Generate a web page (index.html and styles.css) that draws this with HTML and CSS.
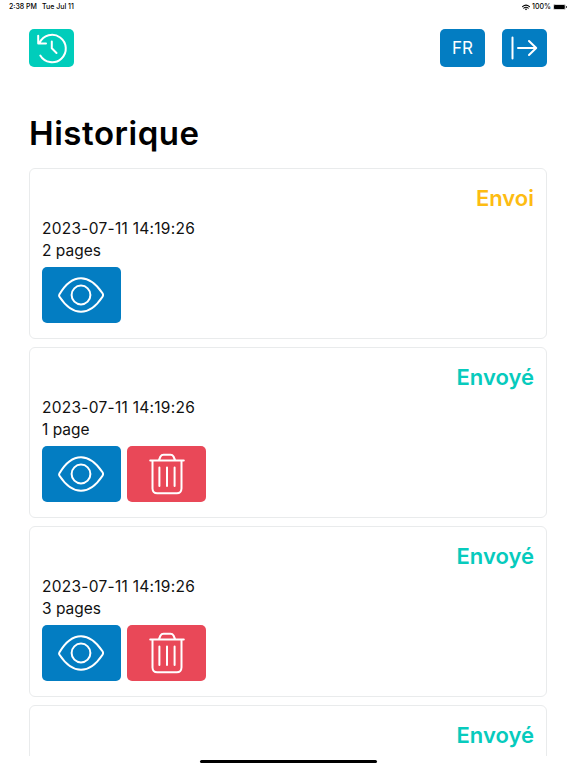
FILE: index.html
```
<!DOCTYPE html>
<html lang="fr">
<head>
<meta charset="utf-8">
<title>Historique</title>
<link rel="stylesheet" href="styles.css">
</head>
<body>
<svg class="symbols" aria-hidden="true">
  <symbol id="eye" viewBox="0 0 46 36">
    <path d="M1.500 17.300C6 9.500 13.500 1.200 23 1.200S40 9.500 44.500 16.300Q45.600 18 44.500 19.700C40 26.500 32.500 34.800 23 34.800S6 26.500 1.500 19.700Q.7 18.500 1.500 17.300"/>
    <circle cx="23" cy="18" r="9.400"/>
  </symbol>
  <symbol id="trash" viewBox="0 0 36 42">
    <path d="M1.200 7.500H34.800M10 7L11.500 3.500Q12.500 1.700 14.500 1.700H21.500Q23.500 1.700 24.500 3.500L26 7M3.500 8V35.500Q3.700 40.300 8.200 40.300H27.800Q32.300 40.300 32.500 35.500V8M10.400 14.500V33M18 14.500V33M25.600 14.500V33"/>
  </symbol>
</svg>
<div class="screen">
  <header class="status">
    <span class="time">2:38 PM</span><span>Tue Jul 11</span>
    <div class="system">
      <svg class="wifi" viewBox="0 0 9 7"><path d="M.6 2.500Q4.500-.8 8.400 2.500M2 4.200Q4.500 2.100 7 4.200"/><path class="dot" d="M3.200 5.200Q4.500 4.300 5.800 5.200L4.500 6.600Z"/></svg>
      <span>100%</span>
      <svg class="battery" viewBox="0 0 14 6"><rect class="shell" x=".3" y=".3" width="12.200" height="5.400" rx="1.500"/><rect x="1" y="1" width="10.800" height="4" rx=".8"/><rect x="13" y="2" width=".7" height="2"/></svg>
    </div>
  </header>
  <nav class="toolbar">
    <button class="tool history" aria-label="Historique">
      <svg viewBox="0 0 45 38"><path d="M11.300 26.500A13.700 13.700 0 1 0 10.600 13.900M9.200 6.800V14.600H17M22.800 12.500V19.200L27.500 24"/></svg>
    </button>
    <button class="tool">FR</button>
    <button class="tool" aria-label="Quitter">
      <svg viewBox="0 0 45 38"><path d="M10.500 8.500V29.500M16 19H34M27 12L34.200 19L27 26"/></svg>
    </button>
  </nav>
  <h1>Historique</h1>
  <main class="list">
    <article class="card">
      <div class="state sending">Envoi</div>
      <p class="date">2023-07-11 14:19:26</p><p>2 pages</p>
      <div class="actions"><button class="action"><svg class="eye"><use href="#eye"/></svg></button></div>
    </article>
    <article class="card">
      <div class="state">Envoyé</div>
      <p class="date">2023-07-11 14:19:26</p><p>1 page</p>
      <div class="actions"><button class="action"><svg class="eye"><use href="#eye"/></svg></button><button class="action delete"><svg class="trash"><use href="#trash"/></svg></button></div>
    </article>
    <article class="card">
      <div class="state">Envoyé</div>
      <p class="date">2023-07-11 14:19:26</p><p>3 pages</p>
      <div class="actions"><button class="action"><svg class="eye"><use href="#eye"/></svg></button><button class="action delete"><svg class="trash"><use href="#trash"/></svg></button></div>
    </article>
    <article class="card">
      <div class="state">Envoyé</div>
    </article>
  </main>
  <footer><div class="home"></div></footer>
</div>
</body>
</html>
```
FILE: styles.css
```
* { box-sizing: border-box; }
body { margin: 0; background: #fff; color: #000; font-family: Inter, sans-serif; }
.symbols { position: absolute; width: 0; height: 0; }
.screen { height: 768px; display: flex; flex-direction: column; overflow: hidden; }
svg { fill: none; stroke: #fff; stroke-width: 2; stroke-linecap: round; stroke-linejoin: round; }
.status { height: 29px; flex: none; padding: 2px 9px 0; display: flex; align-items: flex-start; font-size: 7px; line-height: 10px; font-weight: 500; letter-spacing: 0; }
.time { margin-right: 5px; }
.system { margin-left: auto; display: flex; align-items: center; gap: 2px; }
.system svg { stroke: #000; }
.wifi { width: 8px; height: 7px; stroke-width: 1.200; }
.wifi .dot { fill: #000; stroke: none; }
.battery { width: 14px; height: 6px; }
.battery rect { fill: #000; stroke: none; }
.battery .shell { fill: none; stroke: #999; stroke-width: .5; }
.toolbar { flex: none; height: 38px; padding: 0 29px; display: flex; gap: 17px; }
button { border: 0; padding: 0; color: #fff; background: #037dc2; font-family: inherit; display: flex; align-items: center; justify-content: center; }
.tool { width: 45px; height: 38px; border-radius: 5px; font-size: 17px; }
.tool svg { width: 45px; height: 38px; }
.history { background: #00cdbb; margin-right: auto; }
h1 { flex: none; margin: 46px 29px 15px; height: 40px; font-size: 33px; line-height: 40px; font-weight: 600; letter-spacing: .55px; }
.list { flex: none; height: 588px; padding: 0 29px; overflow: hidden; display: flex; flex-direction: column; gap: 8px; }
.card { flex: none; height: 171px; border: 1px solid #e9ebec; border-radius: 6px; padding: 14px 12px; }
.state { height: 35px; line-height: 31px; text-align: right; font-size: 22px; font-weight: 600; letter-spacing: 0; color: #07cbbd; }
.sending { color: #fdbc12; }
.card p { margin: 0; font-size: 15.500px; line-height: 22.300px; color: #111; }
.card .date { letter-spacing: .27px; }
.actions { display: flex; gap: 6px; margin-top: 4px; }
.action { width: 79px; height: 56px; border-radius: 5px; }
.action .eye { width: 46px; height: 36px; margin-right: 1px; }
.action .trash { width: 36px; height: 42px; }
.delete { background: #e94858; }
footer { flex: none; height: 12px; padding-top: 4px; display: flex; justify-content: center; }
.home { width: 177px; height: 3px; border-radius: 2px; background: #000; }
```
